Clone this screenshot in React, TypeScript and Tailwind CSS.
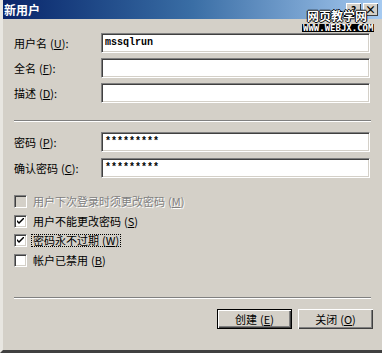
import React from "react";

const sunken =
  "border border-t-[#808080] border-l-[#808080] border-r-white border-b-white shadow-[inset_1px_1px_0_#404040,inset_-1px_-1px_0_#d4d0c8]";

function Key({ k }: { k: string }) {
  return (
    <span className="ml-[3px]">
      (<u>{k}</u>)
    </span>
  );
}

function Field({ label, k, value, top }: { label: string; k: string; value?: string; top: string }) {
  return (
    <div className={`flex items-center ${top}`}>
      <span className="w-[98px] pl-[11px] whitespace-nowrap">
        {label}
        <Key k={k} />:
      </span>
      <div className={`${sunken} flex h-[20px] w-[269px] items-center bg-white pl-[3px] font-['Liberation_Mono',monospace] text-[10px] font-bold text-black`}>
        {value}
      </div>
    </div>
  );
}

function Check({
  label,
  k,
  checked,
  disabled,
  focus,
}: {
  label: string;
  k: string;
  checked?: boolean;
  disabled?: boolean;
  focus?: boolean;
}) {
  return (
    <div className="flex h-[19.5px] items-center pl-[11px]">
      <div
        className={`${sunken} flex h-[13px] w-[13px] items-center justify-center ${disabled ? "bg-[#d4d0c8]" : "bg-white"}`}
      >
        {checked ? (
          <svg width="7" height="7" viewBox="0 0 7 7">
            <path d="M0 2 L0 4 L2 6 L7 1 L7 -1 L2 4 Z" fill="#000" />
          </svg>
        ) : null}
      </div>
      <span
        className={`ml-[5px] whitespace-nowrap px-[1px] ${
          disabled ? "text-[#808080] [text-shadow:1px_1px_0_#fff]" : "text-black"
        } ${focus ? "outline outline-1 outline-dotted outline-black" : ""}`}
      >
        {label}
        <Key k={k} />
      </span>
    </div>
  );
}

function Button({ children, def }: { children: React.ReactNode; def?: boolean }) {
  return (
    <div
      className={`flex h-[20px] w-[75px] items-center justify-center bg-[#d4d0c8] ${
        def
          ? "border border-black shadow-[inset_1px_1px_0_#fff,inset_-1px_-1px_0_#404040,inset_-2px_-2px_0_#808080]"
          : "shadow-[inset_1px_1px_0_#fff,inset_-1px_-1px_0_#404040,inset_-2px_-2px_0_#808080]"
      }`}
    >
      {children}
    </div>
  );
}

export default function App() {
  return (
    <div className="relative h-[353px] w-[382px] overflow-hidden bg-[#d4d0c8] font-['Noto_Sans_CJK_SC','Noto_Sans',sans-serif] text-[11px] leading-none text-black">
      <div className="flex h-[353px] flex-col border-b-[3px] border-l-[3px] border-b-[#404040] border-l-[#e8e6e1]">
        {/* title bar */}
        <div className="relative flex h-[19px] shrink-0 items-center bg-gradient-to-r from-[#0a246a] via-[#3a6ea5] to-[#a6caf0] pl-[1px]">
          <span className="text-[12px] font-bold text-white">新用户</span>
          <div className="ml-auto mr-[4px] flex gap-[2px]">
            <div className="flex h-[13px] w-[15px] items-center justify-center bg-[#d4d0c8] text-[10px] font-bold shadow-[inset_1px_1px_0_#fff,inset_-1px_-1px_0_#404040]">
              ?
            </div>
            <div className="flex h-[13px] w-[15px] items-center justify-center bg-[#d4d0c8] text-[11px] font-bold shadow-[inset_1px_1px_0_#fff,inset_-1px_-1px_0_#404040]">
              ×
            </div>
          </div>
          {/* watermark */}
          <div className="absolute left-[304px] top-[8px] text-[12px] leading-[15px] font-bold text-white [text-shadow:1px_0_0_#000,-1px_0_0_#000,0_1px_0_#000,0_-1px_0_#000]">
            网页教学网
          </div>
          <div className="absolute left-[299px] top-[24px] bg-black px-[1px] font-['DejaVu_Sans_Mono',monospace] text-[9px] font-bold leading-[8px] text-white">
            WWW.WEBJX.COM
          </div>
        </div>

        <Field label="用户名" k="U" value="mssqlrun" top="mt-[14px]" />
        <Field label="全名" k="F" top="mt-[5px]" />
        <Field label="描述" k="D" top="mt-[5px]" />

        <div className="ml-[11px] mt-[17px] h-[2px] w-[357px] border-t border-b border-t-[#808080] border-b-white" />

        <Field label="密码" k="P" value="*********" top="mt-[10px]" />
        <Field label="确认密码" k="C" value="*********" top="mt-[6px]" />

        <div className="mt-[14px] flex flex-col">
          <Check label="用户下次登录时须更改密码" k="M" disabled />
          <Check label="用户不能更改密码" k="S" checked />
          <Check label="密码永不过期" k="W" checked focus />
          <Check label="帐户已禁用" k="B" />
        </div>

        <div className="ml-[11px] mt-[27px] h-[2px] w-[357px] border-t border-b border-t-[#808080] border-b-white" />

        <div className="mr-[9px] mt-[10px] flex justify-end gap-[6px]">
          <Button def>
            创建
            <Key k="E" />
          </Button>
          <Button>
            关闭
            <Key k="O" />
          </Button>
        </div>
      </div>
    </div>
  );
}
